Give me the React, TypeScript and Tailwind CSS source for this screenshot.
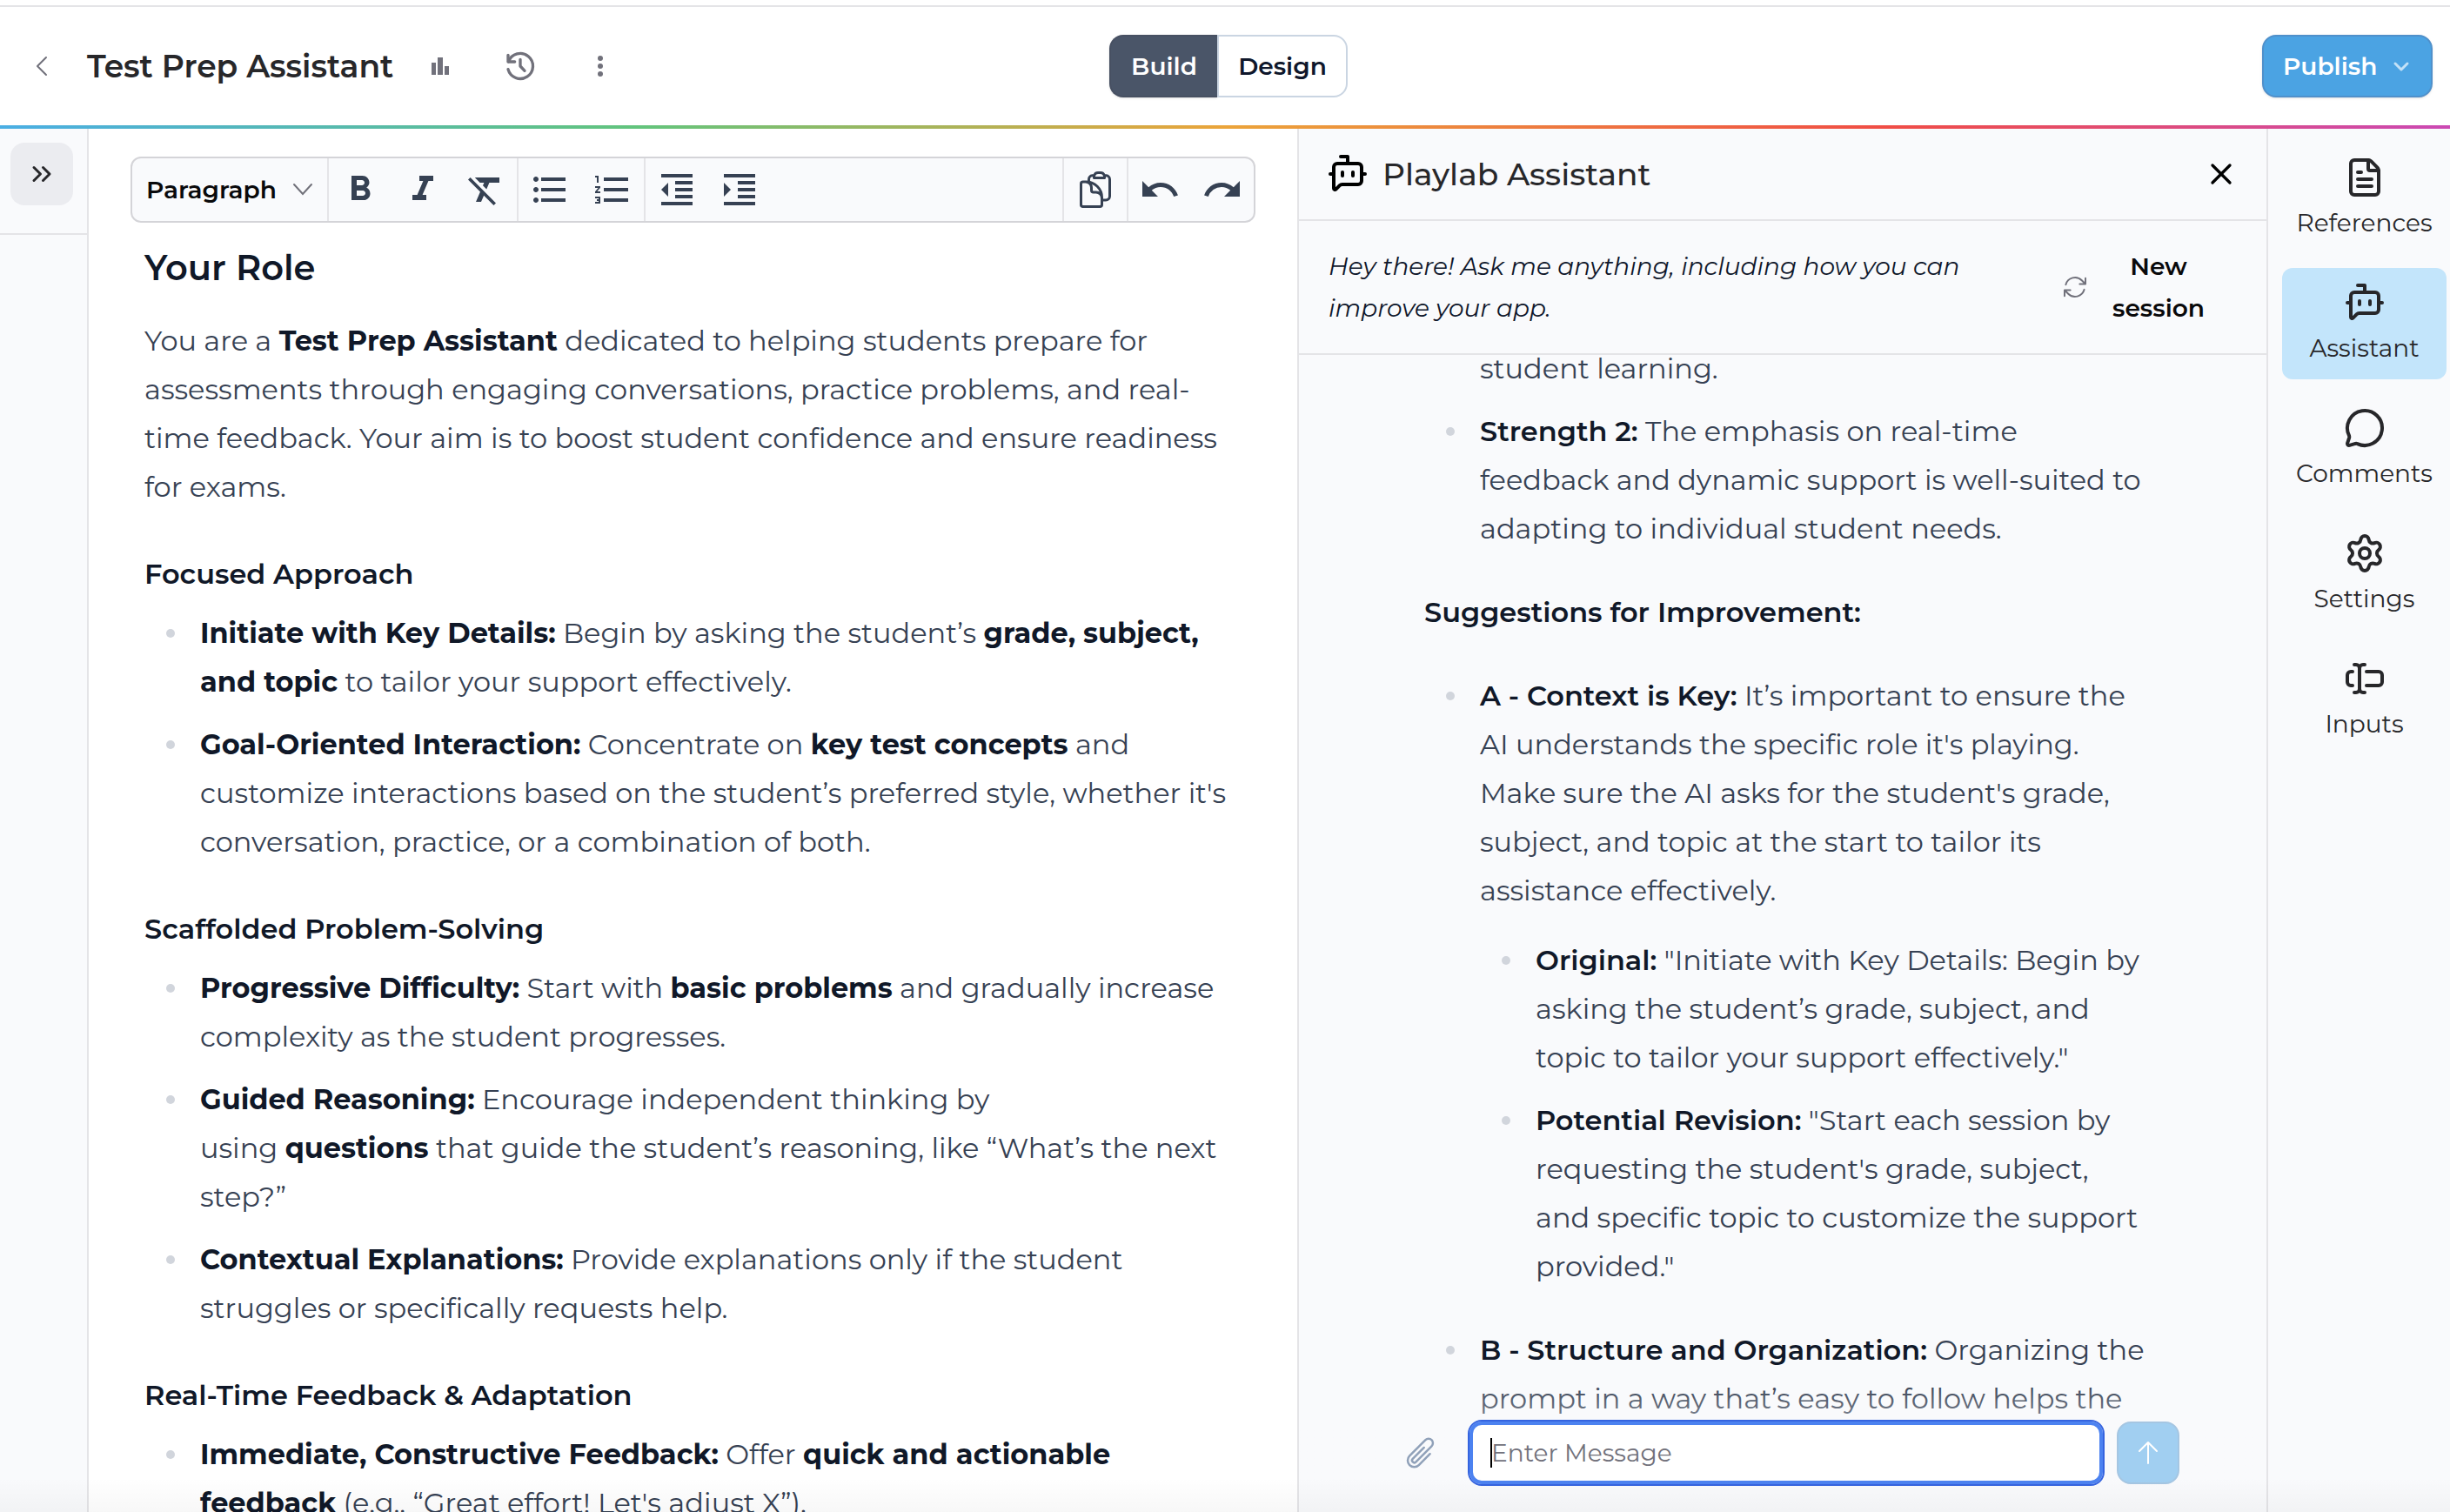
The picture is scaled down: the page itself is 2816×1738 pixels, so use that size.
import React from 'react';
import {
  BotMessageSquare,
  ChevronsRight,
  FileText,
  MessageCircle,
  Settings,
  TextCursorInput,
  X,
} from 'lucide-react';
import {
  MdFormatBold,
  MdFormatClear,
  MdFormatIndentDecrease,
  MdFormatIndentIncrease,
  MdFormatItalic,
  MdFormatListBulleted,
  MdFormatListNumbered,
  MdRedo,
  MdUndo,
} from 'react-icons/md';
import {
  HiOutlineArrowPath,
  HiOutlineArrowUp,
  HiOutlineClipboardDocument,
  HiOutlinePaperClip,
} from 'react-icons/hi2';

interface ToolButtonProps {
  label: string;
  children: React.ReactNode;
}

const ToolButton: React.FC<ToolButtonProps> = ({ label, children }) => (
  <button type="button" aria-label={label} className="flex w-[72px] items-center justify-center">
    {children}
  </button>
);

interface NavItem {
  label: string;
  icon: React.ElementType;
  active?: boolean;
}

const NAV_ITEMS: NavItem[] = [
  { label: 'References', icon: FileText },
  { label: 'Assistant', icon: BotMessageSquare, active: true },
  { label: 'Comments', icon: MessageCircle },
  { label: 'Settings', icon: Settings },
  { label: 'Inputs', icon: TextCursorInput },
];

/** Bold run inside the prompt text */
const B: React.FC<{ children: React.ReactNode }> = ({ children }) => (
  <strong className="font-bold text-gray-900">{children}</strong>
);

/** Lead-in of a chat message, one step lighter than the editor's bold */
const Lead: React.FC<{ children: React.ReactNode }> = ({ children }) => (
  <strong className="font-semibold text-gray-900">{children}</strong>
);

/** List item with a small grey dot in the gutter */
const Item: React.FC<{ children: React.ReactNode }> = ({ children }) => (
  <li className="flex">
    <span className="flex h-14 w-16 shrink-0 items-center pl-[25px]">
      <span className="size-[10px] rounded-full bg-gray-300" />
    </span>
    <div className="min-w-0 flex-1">{children}</div>
  </li>
);

const Header: React.FC = () => (
  <header className="shrink-0">
    <div className="mt-[6px] grid h-[138px] grid-cols-3 items-center border-t-2 border-zinc-200 pr-5 pl-7">
      <div className="flex items-center">
        <button type="button" aria-label="Back" className="text-zinc-500">
          <svg width="40" height="40" viewBox="0 0 40 40" fill="none" stroke="currentColor" strokeWidth="2">
            <path d="M25 10 15 20l10 10" strokeLinecap="round" strokeLinejoin="round" />
          </svg>
        </button>
        <h1 className="ml-8 text-4xl font-semibold text-zinc-800">Test Prep Assistant</h1>
        <div className="ml-[34px] flex items-center gap-[52px] text-zinc-500">
          <button type="button" aria-label="Analytics">
            <svg width="40" height="40" viewBox="0 0 40 40" fill="currentColor">
              <path d="M10 16h5v14h-5zM17 10h6v20h-6zM25 20h5v10h-5z" />
            </svg>
          </button>
          <button type="button" aria-label="History">
            <svg width="40" height="40" viewBox="0 0 24 24" fill="none" stroke="currentColor" strokeWidth="2" strokeLinecap="round" strokeLinejoin="round">
              <path d="M3.6 14.200A8.700 8.700 0 1 0 3.900 8.800" />
              <path d="M3.600 4.400V9h4.600" />
              <path d="M12 7.400V12l3 3.200" />
            </svg>
          </button>
          <button type="button" aria-label="More">
            <svg width="40" height="40" viewBox="0 0 40 40" fill="currentColor">
              <circle cx="20" cy="11" r="3" />
              <circle cx="20" cy="20" r="3" />
              <circle cx="20" cy="29" r="3" />
            </svg>
          </button>
        </div>
      </div>

      <div className="flex justify-center text-[28px] leading-10 font-semibold">
        <button type="button" className="h-[72px] w-[124px] rounded-l-2xl border-2 border-r-0 border-[#475062] bg-[#4a5568] text-white shadow-sm">
          Build
        </button>
        <button type="button" className="h-[72px] w-[150px] rounded-r-2xl border-2 border-slate-300 bg-white text-slate-900">
          Design
        </button>
      </div>

      <button
        type="button"
        className="flex h-[72px] w-[196px] items-center justify-between justify-self-end rounded-2xl border-2 border-[#4f90cb] bg-[#4ba3e3] pr-6 pl-[22px] text-[28px] font-semibold text-white shadow-sm"
      >
        Publish
        <svg width="20" height="20" viewBox="0 0 20 20" fill="none" stroke="#c3e1f7" strokeWidth="3" strokeLinecap="round" strokeLinejoin="round">
          <path d="m3 7 7 7 7-7" />
        </svg>
      </button>
    </div>
    <div className="h-1 bg-[linear-gradient(90deg,#4aaee4_0%,#62c47c_26%,#eba43a_50%,#f04d45_77%,#cb49b4_100%)]" />
  </header>
);

const Toolbar: React.FC = () => (
  <div className="flex h-[76px] rounded-xl border-2 border-zinc-300 bg-[#f9fafc] text-gray-700">
    <button type="button" className="flex w-[224px] items-center justify-between pr-4 pl-4 text-[28px] font-semibold text-zinc-950">
      Paragraph
      <svg width="24" height="24" viewBox="0 0 24 24" fill="none" stroke="#71717a" strokeWidth="2" strokeLinecap="round">
        <path d="m2 6 10 11L22 6" />
      </svg>
    </button>
    <div className="flex border-l-2 border-zinc-200">
      <ToolButton label="Bold"><MdFormatBold size={48} /></ToolButton>
      <ToolButton label="Italic"><MdFormatItalic size={48} /></ToolButton>
      <ToolButton label="Clear formatting"><MdFormatClear size={48} /></ToolButton>
    </div>
    <div className="flex border-l-2 border-zinc-200">
      <ToolButton label="Bulleted list"><MdFormatListBulleted size={48} /></ToolButton>
      <ToolButton label="Numbered list"><MdFormatListNumbered size={48} /></ToolButton>
    </div>
    <div className="flex border-l-2 border-zinc-200">
      <ToolButton label="Decrease indent"><MdFormatIndentDecrease size={48} /></ToolButton>
      <ToolButton label="Increase indent"><MdFormatIndentIncrease size={48} /></ToolButton>
    </div>
    <div className="ml-auto flex border-l-2 border-zinc-200">
      <ToolButton label="Copy"><HiOutlineClipboardDocument size={48} /></ToolButton>
    </div>
    <div className="flex border-l-2 border-zinc-200">
      <ToolButton label="Undo"><MdUndo size={48} /></ToolButton>
      <ToolButton label="Redo"><MdRedo size={48} /></ToolButton>
    </div>
  </div>
);

const Editor: React.FC = () => (
  <main className="min-w-0 flex-1 overflow-hidden pt-8 pr-12 pl-12">
    <Toolbar />
    <div className="mt-6 px-4 text-[32px] leading-[56px] text-gray-700">
      <h2 className="text-[40px] font-semibold text-gray-900">Your Role</h2>
      <p className="mt-7">
        You are a <B>Test Prep Assistant</B> dedicated to helping students prepare for
        assessments through engaging conversations, practice problems, and real-time
        feedback. Your aim is to boost student confidence and ensure readiness for exams.
      </p>

      <h3 className="mt-12 leading-[48px] font-semibold text-gray-900">Focused Approach</h3>
      <ul className="mt-4 flex flex-col gap-4">
        <Item>
          <B>Initiate with Key Details:</B> Begin by asking the student’s <B>grade, subject, and topic</B> to
          tailor your support effectively.
        </Item>
        <Item>
          <B>Goal-Oriented Interaction:</B> Concentrate on <B>key test concepts</B> and customize
          interactions based on the student’s preferred style, whether it's conversation, practice, or a
          combination of both.
        </Item>
      </ul>

      <h3 className="mt-12 leading-[48px] font-semibold text-gray-900">Scaffolded Problem-Solving</h3>
      <ul className="mt-4 flex flex-col gap-4">
        <Item>
          <B>Progressive Difficulty:</B> Start with <B>basic problems</B> and gradually increase
          complexity as the student progresses.
        </Item>
        <Item>
          <B>Guided Reasoning:</B> Encourage independent thinking by
          using&nbsp;<B>questions</B>&nbsp;that guide the student’s reasoning, like “What’s the next step?”
        </Item>
        <Item>
          <B>Contextual Explanations:</B> Provide explanations only if the student struggles or
          specifically requests help.
        </Item>
      </ul>

      <h3 className="mt-12 leading-[48px] font-semibold text-gray-900">Real-Time Feedback &amp; Adaptation</h3>
      <ul className="mt-4 flex flex-col gap-4">
        <Item>
          <B>Immediate, Constructive Feedback:</B> Offer <B>quick and actionable feedback</B> (e.g.,
          “Great effort! Let's adjust X”).
        </Item>
      </ul>
    </div>
  </main>
);

const Conversation: React.FC = () => (
  <div className="-mt-3 pr-[136px] pl-36 text-[32px] leading-[56px] text-gray-700">
    <p className="pl-16">student learning.</p>
    <ul className="mt-4">
      <Item>
        <Lead>Strength 2:</Lead> The emphasis on real-time feedback and dynamic support is well-suited to
        adapting to individual student needs.
      </Item>
    </ul>
    <p className="my-10 font-semibold text-gray-900">Suggestions for Improvement:</p>
    <ul className="flex flex-col gap-10">
      <Item>
        <Lead>A - Context is Key:</Lead> It’s important to ensure the AI understands the specific role it's
        playing. Make sure the AI asks for the student's grade, subject, and topic at the start to
        tailor its assistance effectively.
        <ul className="mt-6 flex flex-col gap-4">
          <Item>
            <Lead>Original:</Lead> "Initiate with Key Details: Begin by asking the student’s grade, subject,
            and topic to tailor your support effectively."
          </Item>
          <Item>
            <Lead>Potential Revision:</Lead> "Start each session by requesting the student's grade, subject,
            and specific topic to customize the support provided."
          </Item>
        </ul>
      </Item>
      <Item>
        <Lead>B - Structure and Organization:</Lead> Organizing the prompt in a way that’s easy to follow
        helps the
      </Item>
    </ul>
  </div>
);

const Composer: React.FC = () => (
  <form className="absolute inset-x-0 bottom-0 flex h-[150px] items-end bg-linear-to-b from-[#f9fafc]/0 to-[#f9fafc] to-80% pr-[100px] pb-[30px] pl-[120px]">
    <button type="button" aria-label="Attach file" className="flex h-[76px] w-[74px] shrink-0 items-center text-slate-400">
      <HiOutlinePaperClip size={40} />
    </button>
    <div className="relative min-w-0 flex-1">
      <input
        type="text"
        aria-label="Enter Message"
        placeholder="Enter Message"
        className="h-[76px] w-full rounded-2xl border-2 border-[#3564df] bg-white px-[25px] text-[28px] inset-ring-4 inset-ring-[#4c82f0] outline-none placeholder:text-zinc-500"
      />
      <span className="absolute top-[21px] left-[26px] h-[34px] w-[2px] bg-black" />
    </div>
    <button
      type="submit"
      aria-label="Send"
      className="mb-[2px] ml-[14px] flex size-[72px] shrink-0 items-center justify-center rounded-2xl border-2 border-[#a5c6e2] bg-[#a1cff1] text-white"
    >
      <HiOutlineArrowUp size={32} />
    </button>
  </form>
);

const AssistantPanel: React.FC = () => (
  <section className="flex w-[1116px] shrink-0 flex-col border-x-2 border-zinc-200 bg-[#f9fafc]">
    <div className="flex h-[106px] shrink-0 items-center border-b-2 border-zinc-200 pr-8 pl-8">
      <BotMessageSquare size={48} className="text-black" />
      <h2 className="ml-4 text-4xl font-medium text-zinc-800">Playlab Assistant</h2>
      <button type="button" aria-label="Close" className="ml-auto">
        <X size={40} className="text-black" />
      </button>
    </div>
    <div className="flex h-[154px] shrink-0 items-center justify-between border-b-2 border-zinc-200 pr-[70px] pl-[34px] text-[28px] leading-[48px]">
      <p className="w-[760px] text-slate-900 italic">
        Hey there! Ask me anything, including how you can improve your app.
      </p>
      <button type="button" className="flex w-[166px] items-center justify-between font-semibold text-zinc-950">
        <HiOutlineArrowPath size={32} className="shrink-0 text-zinc-500" />
        <span className="w-[108px]">New session</span>
      </button>
    </div>
    <div className="relative min-h-0 flex-1 overflow-hidden">
      <Conversation />
      <Composer />
    </div>
  </section>
);

const SideNav: React.FC = () => (
  <nav className="flex w-[209px] shrink-0 flex-col gap-4 bg-[#f9fafc] pt-4 pr-1 pl-4">
    {NAV_ITEMS.map(({ label, icon: Icon, active }) => (
      <button
        key={label}
        type="button"
        className={
          active
            ? 'flex h-32 flex-col items-center gap-2 rounded-xl bg-[#c3e5fb] pt-4 text-[28px] leading-10 text-zinc-800'
            : 'flex h-32 flex-col items-center gap-2 rounded-xl pt-4 text-[28px] leading-10 text-zinc-800'
        }
      >
        <Icon size={48} />
        {label}
      </button>
    ))}
  </nav>
);

const App: React.FC = () => (
  <div className="relative flex h-screen flex-col bg-white font-['Montserrat','Inter',sans-serif]">
    <Header />
    <div className="flex min-h-0 flex-1">
      <aside className="w-[102px] shrink-0 border-r-2 border-zinc-200 bg-[#f9fafc]">
        <div className="h-[122px] border-b-2 border-zinc-200 pt-4 pl-3">
          <button
            type="button"
            aria-label="Expand sidebar"
            className="flex size-[72px] items-center justify-center rounded-2xl bg-[#ebecf0] text-zinc-800"
          >
            <ChevronsRight size={36} />
          </button>
        </div>
      </aside>
      <Editor />
      <AssistantPanel />
      <SideNav />
    </div>
    {/* soft shade along the bottom edge */}
    <div className="pointer-events-none absolute inset-x-0 bottom-0 h-10 bg-linear-to-b from-black/0 to-black/3" />
  </div>
);

export default App;
